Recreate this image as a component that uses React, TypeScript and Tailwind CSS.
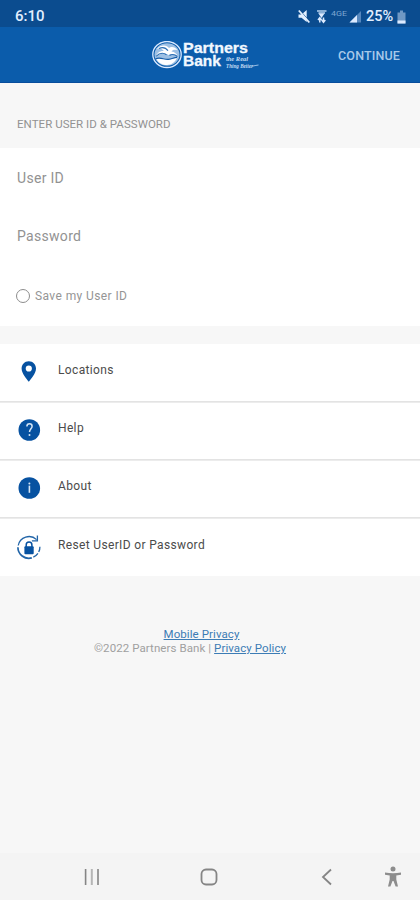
import type { ReactNode } from 'react';

const menuItems = [
  { label: 'Locations', icon: <PinIcon /> },
  { label: 'Help', icon: <HelpIcon /> },
  { label: 'About', icon: <AboutIcon /> },
  { label: 'Reset UserID or Password', icon: <ResetIcon /> },
];

function PinIcon() {
  return (
    <svg width="24" height="24" viewBox="0 0 24 24">
      <path
        fill="#0752a1"
        fillRule="evenodd"
        d="M11.8 1.2C7.5 1.2 4.6 4.5 4.6 8.5c0 5 5.2 10.8 7.2 13.2C13.8 19.3 19 13.5 19 8.5c0-4-2.9-7.3-7.2-7.3Zm0 4.2a3.1 3.1 0 1 1 0 6.2 3.1 3.1 0 0 1 0-6.2Z"
      />
    </svg>
  );
}

function HelpIcon() {
  return (
    <svg width="24" height="24" viewBox="0 0 24 24" fill="none">
      <circle cx="12.3" cy="12" r="10.8" fill="#0752a1" />
      <path d="M9.9 8.5c0-1.7 1-2.7 2.6-2.7s2.6 1 2.6 2.5c0 2.3-2.6 2.7-2.6 5.7" stroke="#d5e5f5" strokeWidth="1.5" />
      <circle cx="12.5" cy="17" r="1" fill="#d5e5f5" />
    </svg>
  );
}

function AboutIcon() {
  return (
    <svg width="24" height="24" viewBox="0 0 24 24">
      <circle cx="12.3" cy="12" r="10.8" fill="#0752a1" />
      <path d="M11.6 9.6h1.6v7.200h-1.600z" fill="#d5e5f5" />
      <circle cx="12.4" cy="7.4" r="1" fill="#d5e5f5" />
    </svg>
  );
}

function ResetIcon() {
  return (
    <svg width="26" height="26" viewBox="0 0 26 26" fill="none">
      <path d="M20.6 5.6A11 11 0 0 0 2.2 11.5" stroke="#2265a8" strokeWidth="1.3" />
      <path d="M1.9 13.2A11 11 0 0 0 15.8 23.9" stroke="#2265a8" strokeWidth="1.7" />
      <path d="M17.3 23.2A11 11 0 0 0 23.9 12.8" stroke="#2265a8" strokeWidth="1.3" strokeDasharray="6 1.5" />
      <path d="M21.4 1.4v5.4h-5.5" stroke="#2265a8" strokeWidth="1.3" />
      <rect x="8.4" y="12.3" width="9.3" height="8" rx="1" fill="#0752a1" />
      <path d="M10.2 13v-2.1a2.85 2.85 0 0 1 5.7 0V13" stroke="#0752a1" strokeWidth="1.5" />
    </svg>
  );
}

function StatusIcons() {
  return (
    <svg width="66" height="18" viewBox="0 0 66 18" fill="none">
      {/* muted speaker */}
      <path d="M1.5 6.5h3l5.2-4.500v12l-5.200-4.300h-3z" fill="#e2efff" />
      <path d="M3 2.500l9.500 10.500" stroke="#0b4c8f" strokeWidth="0.900" />
      <path d="M1.8 2.500l10.500 12" stroke="#e2efff" strokeWidth="1.800" />
      {/* wifi with data arrows */}
      <path d="M20 3h9.500M21.500 5h6.500" stroke="#b5d0ee" strokeWidth="1.600" />
      <path d="M21.500 5.500h6l-3 4.500z" fill="#dceaff" />
      <path d="M22.800 14.500V9.800M21 12l1.800-2.200 1.800 2.200M26.500 9.500v4.700M24.800 12l1.700 2.200 1.800-2.200" stroke="#dceaff" strokeWidth="1.500" />
      <text x="34" y="8" fontSize="7" fill="#7ea6d2" textLength="16" lengthAdjust="spacingAndGlyphs" className="font-['Roboto',sans-serif]">
        4GE
      </text>
      {/* signal strength */}
      <path d="M64 3v11.500h-11.500z" fill="#5687bd" />
      <path d="M60 7v7.500h-7.500z" fill="#dceaff" />
    </svg>
  );
}

function Logo() {
  return (
    <div className="flex items-start">
      <svg width="30" height="28" viewBox="0 0 30 28" fill="none" className="mt-[1px]">
        <ellipse cx="15" cy="13.500" rx="14.200" ry="13" stroke="#dceaff" strokeWidth="1.300" />
        <ellipse cx="15" cy="13.500" rx="12.500" ry="11.300" fill="#9dc0e4" />
        <path d="M4.500 8C9 3.500 14.500 3.500 17 7c2-1.800 6-1.500 8.500 2.300-3-.9-5-.4-6 1.200 3 .2 5.500 2.500 6.500 5.300-3.500-3.500-7-3.500-9.500-1.800-3.200-2.500-8.500-2-12.800 2.300 1-4.500 4.700-6.500 8.100-6.200C10.500 7.800 8 7 4.500 8Z" fill="#fff" />
        <path d="M7 7.500c3.500-1.700 7-.5 9 2.200M4 15.300c3.500-3.500 7.500-3.700 10.500-1.500M17.500 14.500c2.500-1.500 5.500-1 8 1" stroke="#2a6db3" strokeWidth="1.100" />
        <path d="M4.500 18c5-2.500 8.500 1 13 .5 3-.3 5-1.700 7.500-1.700-1.500 4-5.200 7.200-10 7.200-4.500 0-8.500-2-10.500-6Z" fill="#fff" />
        <path d="M3.500 17.800c5-2 8.500 1 13 .5 3.500-.3 5.500-1.800 8.500-1.900" stroke="#155ca8" strokeWidth="1.200" />
      </svg>
      <div className="ml-[1px] flex flex-col">
        <svg width="80" height="14" viewBox="0 0 80 14" className="overflow-visible">
          <text x="0" y="12.500" textLength="65" lengthAdjust="spacingAndGlyphs" fontSize="14.500" fill="#f2f8ff" stroke="#f2f8ff" strokeWidth="0.300" className="font-['Liberation_Sans',Arial,sans-serif] font-bold">
            Partners
          </text>
        </svg>
        <div className="flex">
          <svg width="42" height="16" viewBox="0 0 42 16" className="overflow-visible">
            <text x="0" y="12" textLength="38" lengthAdjust="spacingAndGlyphs" fontSize="14.500" fill="#f2f8ff" stroke="#f2f8ff" strokeWidth="0.300" className="font-['Liberation_Sans',Arial,sans-serif] font-bold">
              Bank
            </text>
          </svg>
          <svg width="36" height="16" viewBox="0 0 36 16" fill="none" className="overflow-visible">
            <g className="font-['Liberation_Serif',serif] font-bold italic" fill="#c5dcf3" fontSize="6">
              <text x="1" y="7" textLength="22" lengthAdjust="spacingAndGlyphs">the Real</text>
              <text x="1" y="13.500" textLength="27" lengthAdjust="spacingAndGlyphs">Thing Better</text>
            </g>
            <path d="M27 12.300c2-.6 4-.9 6.500-1.300" stroke="#a9cbed" strokeWidth="0.900" />
          </svg>
        </div>
      </div>
    </div>
  );
}

function Field({ children }: { children: ReactNode }) {
  return <div className="flex h-[58px] items-center pt-[2px] pl-[17px] text-[14px] tracking-[0.3px] text-[#929292]">{children}</div>;
}

export default function App() {
  return (
    <div className="flex h-[900px] w-[420px] flex-col overflow-hidden bg-[#f7f7f7] font-['Roboto',sans-serif]">
      <div className="flex h-[27px] shrink-0 items-center bg-[#0b4c8f] pt-[6px] pl-[15px] text-[#e2efff]">
        <span className="text-[15px] leading-none font-medium">6:10</span>
        <div className="ml-auto flex items-center pr-[14px]">
          <StatusIcons />
          <span className="ml-[3px] w-[31px] pt-[2px] text-[14.5px] leading-none font-medium">25%</span>
          <svg width="9" height="14" viewBox="0 0 9 14">
            <path d="M3 .5h3v2h2.500v11h-8v-11H3z" fill="#7098c4" />
            <path d="M.5 10.500h8v3h-8z" fill="#dceaff" />
          </svg>
        </div>
      </div>

      <header className="flex h-[56px] shrink-0 border-b border-[#084d9c] bg-[#0b5cab]">
        <div className="mt-[13px] ml-[152px]">
          <Logo />
        </div>
        <button className="mr-[20px] ml-auto h-full pt-[4px] text-[12.5px] font-medium tracking-[0.15px] text-[#a9c9e9]">CONTINUE</button>
      </header>

      <div className="flex h-[65px] shrink-0 items-center pt-[18px] pl-[17px] text-[11.5px] tracking-[0.04px] text-[#929292]">
        ENTER USER ID &amp; PASSWORD
      </div>

      <div className="h-[178px] shrink-0 bg-white">
        <Field>User ID</Field>
        <Field>Password</Field>
        <label className="flex h-[62px] items-center gap-[5px] pt-[1px] pl-[16px] text-[12px] tracking-[0.4px] text-[#959595]">
          <span className="h-[14px] w-[14px] rounded-full border-[1.5px] border-[#8d8d8d]" />
          Save my User ID
        </label>
      </div>

      <ul className="mt-[18px] shrink-0 bg-white">
        {menuItems.map((item) => (
          <li key={item.label} className="relative flex h-[58px] items-center text-[12px] tracking-[0.35px] text-[#4b4b4b] not-last:pb-[2px] not-last:shadow-[0_1px_0_#ececec,inset_0_-1px_0_#e3e3e3]">
            <span className="ml-[15px] flex w-[28px] justify-center">{item.icon}</span>
            <span className="ml-[15px] pb-[4px]">{item.label}</span>
          </li>
        ))}
      </ul>

      <footer className="mt-[51px] pr-[40px] text-center text-[11.5px] leading-[14px] tracking-[0.08px] text-[#a0a0a0]">
        <p className="pl-[23px]">
          <a href="#" className="text-[#3c7cb5] underline">Mobile Privacy</a>
        </p>
        <p>
          ©2022 Partners Bank | <a href="#" className="text-[#3c7cb5] underline">Privacy Policy</a>
        </p>
      </footer>

      <nav className="mt-auto flex h-[47px] shrink-0 items-center bg-[#f4f4f4] text-[#858585]">
        <svg width="16" height="18" viewBox="0 0 16 18" className="ml-[84px]" stroke="currentColor" strokeWidth="1.600">
          <path d="M1.600 1v16M14 1v16" />
          <path d="M7.800 1v16" stroke="#b5b5b5" strokeWidth="2" />
        </svg>
        <svg width="18" height="18" viewBox="0 0 18 18" className="ml-[100px]" fill="none" stroke="currentColor" strokeWidth="1.800">
          <rect x="1.500" y="1.500" width="15" height="15" rx="4.500" />
        </svg>
        <svg width="12" height="18" viewBox="0 0 12 18" className="ml-[103px]" fill="none" stroke="currentColor" strokeWidth="1.800">
          <path d="M10 1.500 2 9l8 7.500" />
        </svg>
        <svg width="18" height="22" viewBox="0 0 18 22" className="ml-[51px]" fill="#8d8d8d">
          <circle cx="9" cy="3" r="2.500" />
          <path d="M1 6.500c5 1 11 1 16 0v2.300l-4.700.8v4l1.700 7h-2.400L9.500 15h-1l-2.100 5.600H4l1.700-7v-4L1 8.800z" />
        </svg>
      </nav>
    </div>
  );
}
